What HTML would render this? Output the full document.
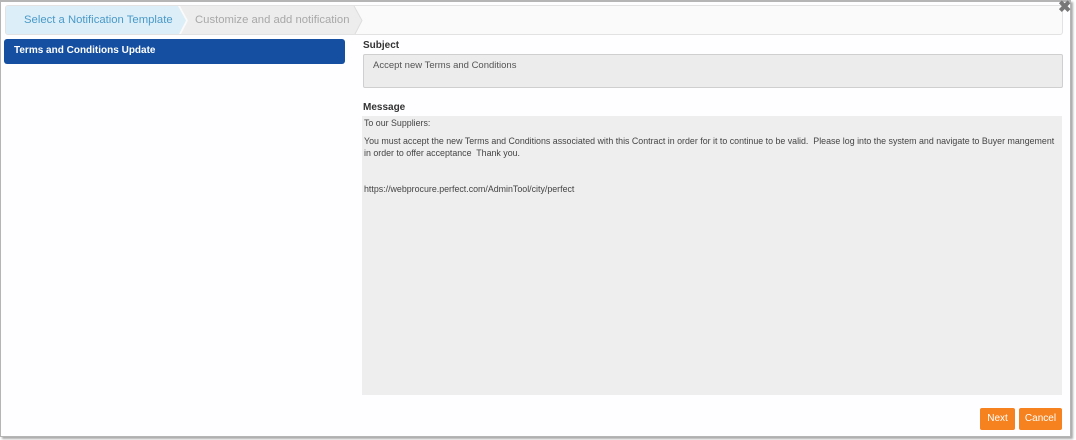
<!DOCTYPE html>
<html><head><style>
*{margin:0;padding:0;box-sizing:border-box}
body{width:1076px;height:440px;background:#fff;font-family:"Liberation Sans",sans-serif;position:relative;overflow:hidden}
.dlg{position:absolute;left:0;top:0;width:1071px;height:437px;border:1px solid #b5b5b5;border-top:2px solid #b5b5b5;box-shadow:2px 2px 2px #aaa;background:#fefdff}
.bc{position:absolute;left:5px;top:5px;width:1058px;height:30px;border:1px solid #e2e2e2;border-radius:3px;background:#fafafa;overflow:hidden}
.abs{position:absolute}
.t{font-size:11.3px;position:absolute;top:8px}
.sel{position:absolute;left:4px;top:39px;width:341px;height:25px;background:#154fa1;border-radius:3px;color:#fff;font-size:10px;font-weight:bold;padding:6px 0 0 10px}
.lbl{position:absolute;left:363px;font-size:10px;font-weight:bold;color:#333}
.inp{position:absolute;left:363px;top:54px;width:700px;height:34px;background:#ececec;border:1px solid #cfcfcf;border-radius:2px;font-size:9.5px;color:#555;padding:5px 0 0 9px}
.ta{position:absolute;left:362px;top:116px;width:700px;height:279px;background:#eeeeee;font-size:8.85px;color:#444;line-height:12px}
.ta div{position:absolute;left:2px;white-space:nowrap}
.btn{position:absolute;top:408px;height:22px;background:#f5821f;color:#fff;font-size:10px;border-radius:2px;text-align:center;line-height:22px}
</style></head><body>
<div class="dlg"></div>
<div class="bc">
  <svg class="abs" style="left:0;top:0" width="360" height="30">
   <polygon points="0,0 172,0 180,14.5 172,30 0,30" fill="#dceef8"/>
   <polygon points="174,0 348,0 356,14.5 348,30 174,30 182,14.5" fill="#ededed"/>
   <polyline points="348,0 356,14.5 348,30" fill="none" stroke="#ddd"/>
  </svg>
  <span class="t" style="left:18px;color:#4a9ac8">Select a Notification Template</span>
  <span class="t" style="left:189px;color:#a8a8a8">Customize and add notification</span>
</div>
<div class="abs" style="left:1058px;top:-3px;font-size:16px;font-weight:bold;color:#777">✖</div>
<div class="sel">Terms and Conditions Update</div>
<div class="lbl" style="top:40px">Subject</div>
<div class="inp">Accept new Terms and Conditions</div>
<div class="lbl" style="top:102px">Message</div>
<div class="ta">
<div style="top:1px">To our Suppliers:</div>
<div style="top:19px">You must accept the new Terms and Conditions associated with this Contract in order for it to continue to be valid.&nbsp; Please log into the system and navigate to Buyer mangement</div>
<div style="top:31px">in order to offer acceptance&nbsp; Thank you.</div>
<div style="top:67px">https://webprocure.perfect.com/AdminTool/city/perfect</div>
</div>
<div class="btn" style="left:980px;width:35px">Next</div>
<div class="btn" style="left:1019px;width:43px">Cancel</div>
</body></html>
